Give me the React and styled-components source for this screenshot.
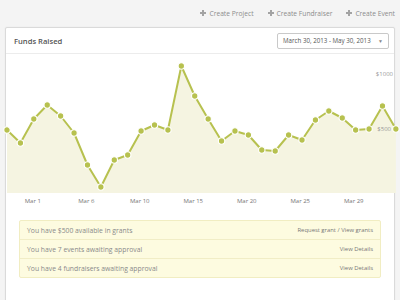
import React from "react";
import styled, { createGlobalStyle } from "styled-components";

const GlobalStyle = createGlobalStyle`
  body {
    margin: 0;
    background: #f4f4f4;
    font-family: "Open Sans", Lato, sans-serif;
    overflow: hidden;
  }
`;

const Page = styled.div`
  padding: 0 5px;
  width: 390px;
`;

const TopBar = styled.div`
  height: 27px;
  display: flex;
  justify-content: flex-end;
  align-items: center;
  gap: 14px;
  padding-bottom: 1px;
  box-sizing: border-box;
`;

const Action = styled.span`
  display: flex;
  align-items: center;
  gap: 3px;
  font-size: 6.7px;
  color: #8c8c8c;
`;

const Plus = styled.i`
  position: relative;
  width: 6px;
  height: 6px;
  &::before,
  &::after {
    content: "";
    position: absolute;
    background: #a3a3a3;
  }
  &::before {
    left: 0;
    top: 2px;
    width: 6px;
    height: 2px;
  }
  &::after {
    left: 2px;
    top: 0;
    width: 2px;
    height: 6px;
  }
`;

const Card = styled.div`
  background: #fff;
  border: 1px solid #dadada;
  border-radius: 2px;
  box-shadow: 0 0 2px rgba(0, 0, 0, 0.06);
  height: 290px;
`;

const Header = styled.div`
  height: 25px;
  display: flex;
  align-items: center;
  justify-content: space-between;
  padding: 0 5px 0 8px;
  border-bottom: 1px solid #ececec;
`;

const Title = styled.div`
  font-size: 7.6px;
  font-weight: 600;
  color: #555;
`;

const DateSelect = styled.div`
  width: 112px;
  height: 16px;
  box-sizing: border-box;
  border: 1px solid #c9c9c9;
  border-radius: 2px;
  display: flex;
  align-items: center;
  justify-content: space-between;
  padding: 0 5px 0 5px;
  font-size: 6.2px;
  color: #555;
  white-space: nowrap;
  span {
    font-size: 5px;
    color: #888;
  }
`;

const ChartBox = styled.div`
  height: 139px;
  svg {
    display: block;
    overflow: visible;
  }
`;

const AxisRow = styled.div`
  display: flex;
  height: 16px;
  align-items: center;
`;

const AxisLabel = styled.div`
  width: 53.5px;
  text-align: center;
  font-size: 6px;
  color: #777;
`;

const Alerts = styled.div`
  margin: 11px 13px 0;
  background: #fdfbe0;
  border: 1px solid #f1edc2;
  border-radius: 2px;
`;

const AlertRow = styled.div`
  height: 18px;
  display: flex;
  align-items: center;
  justify-content: space-between;
  padding: 0 7px 0 7px;
  font-size: 6.8px;
  color: #8a8a8a;
  & + & {
    border-top: 1px solid #f1edc6;
  }
`;

const AlertLink = styled.span`
  color: #777;
  font-size: 5.9px;
`;

const Section = styled.div`
  margin: 21px 0 0 16px;
  font-size: 11px;
  color: #555;
`;

const points = [
  129, 142, 118, 104, 115, 132, 164, 186, 159, 154, 130, 124, 129, 65, 95,
  118, 140, 130, 134, 149, 150, 134, 139, 119, 110, 117, 129, 128, 105, 128,
];
const labels = ["Mar 1", "Mar 6", "Mar 10", "Mar 15", "Mar 20", "Mar 25", "Mar 29"];

const Chart = () => {
  const pts = points.map((y, i) => [1 + i * 13.41, y - 53]);
  const line = pts.map(([x, y]) => `${x},${y}`).join(" ");
  const area = `M${pts[0][0]},139 L${line} L${pts[pts.length - 1][0]},139 Z`;
  return (
    <svg width="388" height="139">
      <path d={area} fill="#f5f4e1" />
      <text x="387" y="22" textAnchor="end" fontSize="6" fill="#999" fontFamily="Open Sans">
        $1000
      </text>
      <text x="385" y="77" textAnchor="end" fontSize="6" fill="#999" fontFamily="Open Sans">
        $500
      </text>
      <polyline points={line} fill="none" stroke="#b7c14f" strokeWidth="2" strokeLinejoin="round" />
      {pts.map(([x, y], i) => (
        <circle key={i} cx={x} cy={y} r="3.2" fill="#b7c14f" stroke="#fff" strokeWidth="1.1" />
      ))}
    </svg>
  );
};

const App = () => (
  <Page>
    <GlobalStyle />
    <TopBar>
      <Action><Plus />Create Project</Action>
      <Action><Plus />Create Fundraiser</Action>
      <Action><Plus />Create Event</Action>
    </TopBar>
    <Card>
      <Header>
        <Title>Funds Raised</Title>
        <DateSelect>
          March 30, 2013 - May 30, 2013 <span>▼</span>
        </DateSelect>
      </Header>
      <ChartBox>
        <Chart />
      </ChartBox>
      <AxisRow>
        {labels.map((l) => (
          <AxisLabel key={l}>{l}</AxisLabel>
        ))}
      </AxisRow>
      <Alerts>
        <AlertRow>
          You have $500 available in grants
          <AlertLink>Request grant / View grants</AlertLink>
        </AlertRow>
        <AlertRow>
          You have 7 events awaiting approval
          <AlertLink>View Details</AlertLink>
        </AlertRow>
        <AlertRow>
          You have 4 fundraisers awaiting approval
          <AlertLink>View Details</AlertLink>
        </AlertRow>
      </Alerts>
      <Section>Recent Activity</Section>
    </Card>
  </Page>
);

export default App;
